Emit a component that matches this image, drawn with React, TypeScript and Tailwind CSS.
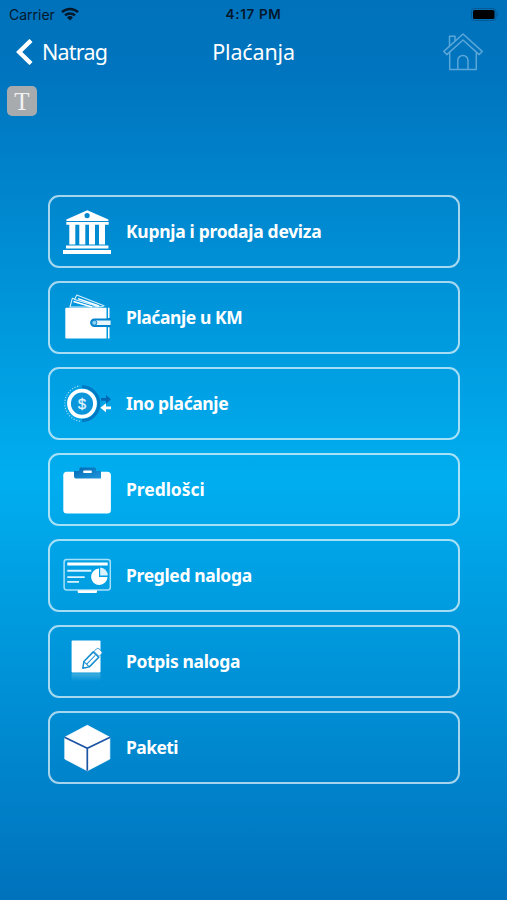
import type { ReactNode } from "react"

interface MenuItem {
  label: string
  tracking: string
  icon: ReactNode
}

function BankIcon() {
  return (
    <svg viewBox="0 0 48 48" className="h-12 w-12 fill-white">
      <path fillRule="evenodd" d="M24.3 2.3 45.4 11.6V13H3.4V11.6ZM24.1 5A2.6 2.6 0 1 0 24.1 10.2 2.6 2.6 0 1 0 24.1 5Z" />
      <path d="M3.3 14H45.7V16.8H3.3ZM6.3 16.8H12.3V36.4H6.3ZM16.3 16.8H22.3V36.4H16.3ZM26 16.8H32V36.4H26ZM36 16.8H42V36.4H36Z" />
      <path d="M3 37.4H45.4V40.6H3ZM0 42H48V45.9H0Z" />
    </svg>
  )
}

function WalletIcon() {
  return (
    <svg viewBox="0 0 48 48" className="h-12 w-12">
      <g fill="#0094dc" stroke="#d5effd" strokeWidth="1.1" strokeLinejoin="round">
        <path d="M7 13 9.3 4.3 36 13Z" />
        <path d="M11.5 5.5 13.8 1 41 11.8 38 13Z" />
      </g>
      <path d="M10.5 7.5 29 13M15 4.6 36 12" stroke="#fff" strokeWidth="1.5" />
      <path d="M3.3 13.8H43.5V44.4H3.3Q2.3 44.4 2.3 43.4V14.8Q2.3 13.8 3.3 13.8Z" fill="#fff" />
      <path d="M45 13.8h1.5v10.3H45ZM45 33.2h1.5v11.2H45Z" fill="#fff" />
      <path d="M48 24.6H31.3a4.2 4.2 0 0 0 0 8.4H48Z" fill="#0084cd" />
      <path d="M47.6 26.5H31.6a2.3 2.3 0 0 0 0 4.6H47.6Z" fill="#e8f7ff" />
      <circle cx="31.3" cy="28.8" r="2.5" fill="#8dd0f2" stroke="#0c86cb" strokeWidth="1" />
    </svg>
  )
}

function ExchangeIcon() {
  return (
    <svg viewBox="0 0 48 48" className="h-12 w-12">
      <path d="M19 6.8A16.9 16.9 0 0 1 19 40.6" fill="none" stroke="#0079c2" strokeWidth="3" />
      <path d="M17 41.2A17.9 17.9 0 0 1 17 5.8" fill="none" stroke="#a9dcf6" strokeWidth="1.1" strokeDasharray="1.2 1.6" />
      <circle cx="19" cy="23.6" r="13" fill="#0b96dc" stroke="#fff" strokeWidth="3.8" />
      <text x="19" y="28.6" textAnchor="middle" fontSize="14.5" fill="#e4f5fd" stroke="#e4f5fd" strokeWidth="0.3" className="font-['Liberation_Sans',sans-serif] font-normal">
        $
      </text>
      <path d="M38 17.9h5v-3l5 4.4-5 4.4v-3h-5Z" fill="#0068b5" />
      <path d="M48 26.4h-5v-3.1l-5.6 4.5 5.6 4.5v-3.1h5Z" fill="#fff" />
    </svg>
  )
}

function ClipboardIcon() {
  return (
    <svg viewBox="0 0 48 48" className="h-12 w-12">
      <defs>
        <linearGradient id="clip" x1="0" y1="0" x2="1" y2="1">
          <stop offset="0" stopColor="#0068b3" />
          <stop offset="1" stopColor="#2096dc" />
        </linearGradient>
      </defs>
      <rect x="0.3" y="5.8" width="47.6" height="41.8" rx="3.5" fill="#fff" />
      <path d="M11 5h5.2V3q0-1.5 1.5-1.5h13.8Q33 1.5 33 3v2h5v7.5H13Q11 12.5 11 10.5Z" fill="url(#clip)" />
      <rect x="20.3" y="4.6" width="8.4" height="2.4" rx="0.6" fill="#fff" />
    </svg>
  )
}

function MonitorIcon() {
  return (
    <svg viewBox="0 0 48 48" className="h-12 w-12">
      <rect x="1.1" y="7.6" width="46.2" height="30.3" rx="2.6" fill="none" stroke="#a6e0fb" strokeWidth="1.5" />
      <path d="M4.3 10.6H44.7V13.6H4.3Z" fill="#fff" />
      <path d="M4.3 18.8H28.3M4.3 25.1H21.7M4.3 29.9H16" stroke="#d9f2fe" strokeWidth="1.9" />
      <path d="M36 16.6V24.9H44.5A8.2 8.2 0 1 1 36 16.6Z" fill="#fff" />
      <path d="M37.2 15.4A8.4 8.4 0 0 1 44.8 23.6H37.2Z" fill="#d9f2fe" />
      <path d="M14.7 38.3H34V40Q34 41 33 41H15.7Q14.7 41 14.7 40Z" fill="#fff" />
    </svg>
  )
}

function SignIcon() {
  return (
    <svg viewBox="0 0 48 48" className="h-12 w-12">
      <defs>
        <linearGradient id="mirror" x1="0" y1="0" x2="0" y2="1">
          <stop offset="0" stopColor="#fff" stopOpacity="0.25" />
          <stop offset="1" stopColor="#fff" stopOpacity="0" />
        </linearGradient>
      </defs>
      <rect x="8.6" y="2.5" width="28.9" height="32" rx="1" fill="#fff" />
      <rect x="8.6" y="35.3" width="28.9" height="8" fill="url(#mirror)" />
      <g transform="translate(19.8 30.2) rotate(-46)" strokeLinejoin="round">
        <path d="M0 0 5.5-3.8H19V3.8H5.5Z" fill="#fff" stroke="#128ccf" strokeWidth="1.5" />
        <path d="M5.5-3.4V3.4M6 0H18" stroke="#128ccf" strokeWidth="1" />
        <path d="M19.8-3.6h3.4a2 2 0 0 1 2 2v3.2a2 2 0 0 1-2 2h-3.4Z" fill="#fff" stroke="#128ccf" strokeWidth="0.8" />
      </g>
    </svg>
  )
}

function BoxIcon() {
  return (
    <svg viewBox="0 0 48 48" className="h-12 w-12">
      <path d="M24.3 1.3 46.8 13.2V35L24.3 46.8 1.8 35V13.2Z" fill="#fff" stroke="#fff" strokeWidth="0.8" strokeLinejoin="round" />
      <path d="M1.5 13.2 24.3 24.2 47.1 13.2M24.3 24.2V46.8" fill="none" stroke="#1d55a5" strokeWidth="1.7" />
    </svg>
  )
}

function HomeIcon() {
  return (
    <svg viewBox="0 0 40 38" className="h-[38px] w-10 fill-none stroke-[#5aa7d9]" strokeWidth="1.5" strokeLinejoin="round">
      <path d="M20 1 39.2 18.4 36.2 21.6 20 7 3.8 21.6.8 18.4Z" />
      <path d="M6.5 13V3.2H12V8M6.7 19.2V36.5H33.3V19.2" />
      <path d="M14.8 36.3V27.5a5.1 5.1 0 0 1 10.2 0V36.3" />
    </svg>
  )
}

const items: MenuItem[] = [
  { label: "Kupnja i prodaja deviza", tracking: "tracking-[-0.3px]", icon: <BankIcon /> },
  { label: "Plaćanje u KM", tracking: "tracking-[-0.42px]", icon: <WalletIcon /> },
  { label: "Ino plaćanje", tracking: "tracking-[-0.4px]", icon: <ExchangeIcon /> },
  { label: "Predlošci", tracking: "tracking-[-0.05px]", icon: <ClipboardIcon /> },
  { label: "Pregled naloga", tracking: "tracking-[-0.35px]", icon: <MonitorIcon /> },
  { label: "Potpis naloga", tracking: "tracking-[-0.35px]", icon: <SignIcon /> },
  { label: "Paketi", tracking: "tracking-[-0.6px]", icon: <BoxIcon /> },
]

function StatusBar() {
  return (
    <div className="grid h-7 grid-cols-3 items-center px-[9px] font-['Inter',sans-serif] text-[#03182b]">
      <div className="flex items-center gap-[6px] text-[14px]">
        <span>Carrier</span>
        <svg viewBox="0 0 18 14" className="h-[14px] w-[18px] fill-none stroke-[#03182b]" strokeWidth="2.5">
          <path d="M1 5.2a11.6 11.6 0 0 1 16 0M4 8.4a7.3 7.3 0 0 1 10 0" />
          <path d="M9 13.5 6 10.5a4.4 4.4 0 0 1 6 0Z" className="fill-[#03182b] stroke-none" />
        </svg>
      </div>
      <span className="text-center text-[13.5px] font-semibold tracking-[0.65px]">4:17 PM</span>
      <svg viewBox="0 0 28 13" className="-mr-px h-[13px] w-7 justify-self-end">
        <rect x="0.5" y="0.5" width="24.5" height="12" rx="3" fill="none" stroke="#075993" />
        <rect x="2" y="2" width="21.5" height="9" rx="1.6" fill="#000" />
        <path d="M26.2 4.5q1.6 2 0 4Z" fill="#075993" />
      </svg>
    </div>
  )
}

export default function App() {
  return (
    <div className="flex h-[900px] w-[507px] flex-col overflow-hidden bg-[linear-gradient(180deg,#0072bc_0px,#0074be_70px,#00aeef_480px,#0072bc_900px)] font-['Noto_Sans',sans-serif] text-white">
      <StatusBar />
      <header className="grid h-12 grid-cols-3 items-center px-4">
        <button className="flex items-center gap-[9px] text-[21.5px] tracking-[-0.8px]">
          <svg viewBox="0 0 17 26" className="h-[26px] w-[17px] fill-none stroke-white" strokeWidth="4.4">
            <path d="M15 1.5 3.2 13 15 24.5" />
          </svg>
          Natrag
        </button>
        <h1 className="text-center text-[21.5px] tracking-[-0.15px]">Plaćanja</h1>
        <div className="mr-2 justify-self-end">
          <HomeIcon />
        </div>
      </header>
      <div className="mt-[10px] ml-[7px] flex h-[30px] w-[30px] items-center justify-center rounded-[5px] bg-[#a8abae] font-['Liberation_Serif',serif] text-[25px] leading-none text-[#f2f2f2]">
        T
      </div>
      <nav className="mt-[79px] ml-12 flex w-[412px] flex-col gap-[13px]">
        {items.map((item) => (
          <button
            key={item.label}
            className="flex h-[73px] items-center gap-[15px] rounded-[11px] border-2 border-white/65 pl-[13px] text-left text-[17.5px] font-bold"
          >
            {item.icon}
            <span className={item.tracking}>{item.label}</span>
          </button>
        ))}
      </nav>
    </div>
  )
}
